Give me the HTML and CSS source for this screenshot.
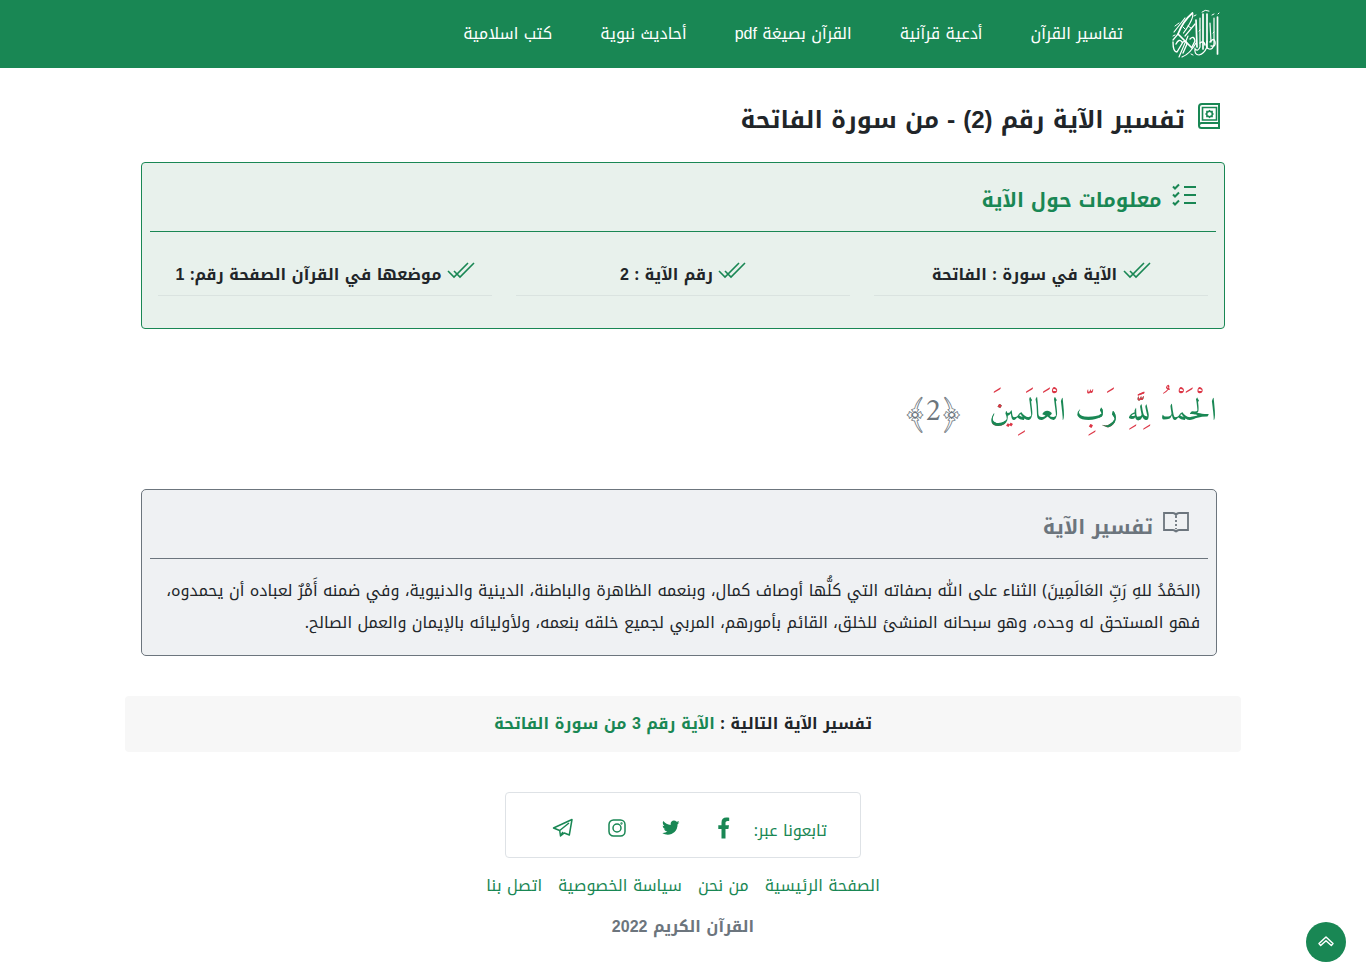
FILE: index.html
```html
<!DOCTYPE html>
<html lang="ar" dir="rtl">
<head>
<meta charset="utf-8">
<title>تفسير الآية رقم (2) - من سورة الفاتحة</title>
<link rel="stylesheet" href="styles.css">
</head>
<body>
<header class="navbar">
  <div class="nav-inner">
    <svg class="logo" width="50" height="50" viewBox="0 0 50 50" fill="none" stroke="#fff" stroke-width="1.200" stroke-linecap="round" stroke-linejoin="round">
      <path stroke-width="1.700" d="M46.500 8v37M36 5v33M32 5v35M25 11l1 27M21.500 4Q12 12 7 25l14 14"/>
      <path d="M43 9v26q-1 6-5 5t-2-8M39 14l1 19M36 38q-3 7-8 8-5 0-4-7M29 9v29q-2 5-5 2M21.500 4q2 5-9 20M14 9L3 23M14 27l10-12M7 25l-5 6M17 27L8 48M11 48q8-3 14-14"/>
      <path stroke-width="1.400" d="M2 33q0 10 4 10l6-10q3-2 4 2l-4 9M5 35q3-6 6-2M19 30q4-4 5 2l-3 6M39 33q4-5 5 0t-4 4M29 34q4-3 5 2"/>
      <path stroke-width="1" d="M31 3q3-3 7-1M41 6l2-1M23 7l2-1M4 17l4-3M17 17l3 2M2 27l2-1M20 45l2 1M28 22l1-1M42 24l1-1M12 18l2 2M47 5l1-1"/>
    </svg>
    <nav class="menu"><a>تفاسير القرآن</a><a>أدعية قرآنية</a><a>القرآن بصيغة <span class="latin">pdf</span></a><a>أحاديث نبوية</a><a>كتب اسلامية</a></nav>
  </div>
</header>
<main class="container">
  <h1 class="title">
    <svg class="quran" width="22" height="27" viewBox="0 0 22 27" fill="none" stroke="#198754" stroke-width="2"><path d="M21 20H3.500A2.500 2.500 0 0 0 1 22.500V4a3 3 0 0 1 3-3h17v24H3.500a2.500 2.500 0 0 1 0-5"/><path stroke-width="1.600" d="M4.500 4.500h14v12.500h-14z"/><path stroke-width="1.700" d="M11.500 7.800l1 .8h1.500v1.400l.8 1-.8 1v1.400h-1.500l-1 .8-1-.8H9V12l-.8-1 .8-1V8.600h1.500z"/></svg>
    <span>تفسير الآية رقم <span class="latin">(2)</span> - من سورة الفاتحة</span>
  </h1>
  <section class="info">
    <h2 class="info-title"><svg width="25" height="24" viewBox="0 0 25 24" fill="none" stroke="#198754" stroke-width="2"><path d="M12 4h12M12 12h12M12 20h12M1 3.500l2 2 4-4M1 11.500l2 2 4-4M1 19.500l2 2 4-4"/></svg><span>معلومات حول الآية</span></h2>
    <div class="facts">
      <div class="fact"><svg width="28" height="17" viewBox="0 0 28 17" fill="none" stroke="#198754" stroke-width="1.600"><path d="M1 9l6 6L21 1M7 9l6 6L27 1"/></svg><span>الآية في سورة : الفاتحة</span></div>
      <div class="fact"><svg width="28" height="17" viewBox="0 0 28 17" fill="none" stroke="#198754" stroke-width="1.600"><path d="M1 9l6 6L21 1M7 9l6 6L27 1"/></svg><span>رقم الآية : <span class="latin">2</span></span></div>
      <div class="fact"><svg width="28" height="17" viewBox="0 0 28 17" fill="none" stroke="#198754" stroke-width="1.600"><path d="M1 9l6 6L21 1M7 9l6 6L27 1"/></svg><span>موضعها في القرآن الصفحة رقم: <span class="latin">1</span></span></div>
    </div>
  </section>
  <div class="verse"><span class="ayah">الْحَمْدُ لِلَّهِ رَبِّ الْعَالَمِينَ</span><span class="number">﴿2﴾</span></div>
  <section class="tafsir">
    <h2 class="tafsir-title"><svg width="28" height="24" viewBox="0 0 28 24" fill="none" stroke="#6c757d" stroke-width="1.800"><path d="M14 22q-1-2-3-2H2V3h9q2 0 3 2q1-2 3-2h9v17h-9q-2 0-3 2"/><path stroke-dasharray="2 2" d="M14 6v13"/></svg><span>تفسير الآية</span></h2>
    <p class="body-text"><span>(الحَمْدُ للهِ رَبِّ العَالَمِينَ) الثناء على اللّٰه بصفاته التي كلُّها أوصاف كمال، وبنعمه الظاهرة والباطنة، الدينية والدنيوية، وفي ضمنه أَمْرٌ لعباده أن يحمدوه،</span><span>فهو المستحق له وحده، وهو سبحانه المنشئ للخلق، القائم بأمورهم، المربي لجميع خلقه بنعمه، ولأوليائه بالإيمان والعمل الصالح.</span></p>
  </section>
  <div class="next"><span>تفسير الآية التالية : <a>الآية رقم <span class="latin">3</span> من سورة الفاتحة</a></span></div>
</main>
<footer class="footer">
  <div class="social"><span>تابعونا عبر:</span>
    <svg class="fb" width="12" height="22" viewBox="0 0 12 22" fill="#198754"><path d="M3.500 21.500V12H.3V8.200h3.200V5.400C3.500 2.200 5.300.5 8.300.5c1.400 0 2.900.2 2.900.2v3.200H9.600c-1.600 0-2.100 1-2.100 2v2.300H11l-.6 3.800H7.500v9.500z"/></svg>
    <svg class="tw" width="18" height="16" viewBox="0 0 18 16" fill="#198754"><path d="M17.500 2.300q-.9.500-2 .6Q16.700 2.200 17 .9q-1 .7-2.300.9C12-1 8 1 8.700 4.900 5.700 4.700 3.100 3.300 1.300 1c-1 1.700-.5 3.700 1.100 4.900q-1 0-1.700-.5c0 1.800 1.200 3.300 2.900 3.700q-.8.200-1.600 0c.5 1.500 1.800 2.500 3.400 2.500Q3.300 13.200.3 13c6.500 4.100 15.300.2 15.300-8.800q1.200-.8 1.900-1.900"/></svg>
    <svg class="ig" width="18" height="18" viewBox="0 0 18 18" fill="none" stroke="#198754" stroke-width="1.500"><rect x="1" y="1" width="16" height="16" rx="4.500"/><circle cx="9" cy="9" r="4"/><circle cx="13.500" cy="4.500" r=".4"/></svg>
    <svg class="tg" width="21" height="19" viewBox="0 0 21 19" fill="none" stroke="#198754" stroke-width="1.500" stroke-linejoin="round"><path d="M1.500 10L20 1.500l-2.700 15.500-5-2-3.800 3-.8-5.500zM7.700 12.500L17 5M9 17l2-3"/></svg>
  </div>
  <nav class="links"><a>الصفحة الرئيسية</a><a>من نحن</a><a>سياسة الخصوصية</a><a>اتصل بنا</a></nav>
  <div class="copyright"><span>القرآن الكريم <span class="latin">2022</span></span></div>
</footer>
<a class="to-top"><svg width="18" height="14" viewBox="0 0 18 14" fill="none" stroke="#fff" stroke-width="1.500" stroke-linejoin="round"><path d="M9 2l7 6.500-1.700 2L9 5.700l-5.300 4.800L2 8.500z"/></svg></a>
</body>
</html>
```
FILE: styles.css
```css
* { box-sizing: border-box; }
body { margin: 0; height: 972px; overflow: hidden; background: #fff; color: #212529; font-family: "Noto Kufi Arabic", "Liberation Sans", "DejaVu Sans", sans-serif; font-size: 16px; }
h1, h2, p { margin: 0; }
svg { display: block; flex: none; }
span, a { white-space: nowrap; }
.latin { font-family: "Liberation Sans", sans-serif; }
.navbar { height: 68px; background: #198754; color: #fff; }
.nav-inner { width: 1116px; margin: auto; padding: 9px 20px 0; display: flex; }
.menu { display: flex; gap: 48px; margin-right: 48px; height: 48px; align-items: center; }
.container { width: 1116px; margin: 0 auto; }
.title { height: 94px; padding: 35px 21px 0; display: flex; gap: 13px; font-size: 24px; line-height: 34px; }
.info { height: 167px; margin: 0 16px; padding: 0 8px; border: 1px solid #198754; border-radius: 4px; background: #e8f1ec; }
.info-title { height: 69px; padding: 20px 19px 0; display: flex; gap: 10.5px; border-bottom: 1px solid #198754; color: #198754; font-size: 20px; line-height: 34px; }
.facts { display: grid; grid-template-columns: repeat(3, 1fr); gap: 24px; padding: 24px 8px 0; }
.fact { height: 40px; display: flex; justify-content: center; gap: 5.5px; padding-top: 5px; border-bottom: 1px solid #dae3e0; font-weight: 700; line-height: 28px; }
.fact svg { margin: 1px -0.5px 0 0; }
.verse { height: 160px; padding: 51px 24px 0; display: flex; gap: 25px; font-family: "Amiri", serif; font-size: 32px; line-height: 64px; }
/* Letters are green, vowel signs and dots red. */
.ayah {
  height: 70px; margin-top: -11px; font-family: "Amiri Quran", "Amiri", serif; color: transparent;
  background:
    linear-gradient(#dc3545, #dc3545) right 213px top 32px / 10px 7px no-repeat,
    linear-gradient(#dc3545, #dc3545) right 67px top 0 / 17px 33px no-repeat,
    linear-gradient(#198754, #198754) right 212px top 40px / 20px 18px no-repeat,
    linear-gradient(#198754, #198754) right 101px top 40px / 17px 22px no-repeat,
    linear-gradient(#dc3545 28px, #198754 28px 54px, #dc3545 54px);
  background-clip: text; -webkit-background-clip: text;
}
.number { color: #6c757d; }
.tafsir { height: 167px; margin: 0 24px 0 16px; padding: 0 8px; border: 1px solid #6c757d; border-radius: 5px; background: #eff1f3; }
.tafsir-title { height: 69px; padding: 20px 18px 0; display: flex; gap: 9px; border-bottom: 1px solid #6c757d; color: #6c757d; font-size: 20px; line-height: 34px; }
.body-text { padding: 16px 8px; line-height: 32px; }
.body-text span { display: block; width: max-content; }
.next { margin-top: 40px; height: 56px; background: #f7f7f7; border-radius: 4px; text-align: center; font-weight: 700; line-height: 56px; }
.next a { color: #198754; }
.footer { margin-top: 40px; color: #198754; display: flex; flex-direction: column; align-items: center; }
.social { display: flex; width: 356px; height: 66px; border: 1px solid #dee2e6; border-radius: 4px; padding: 0 33px; line-height: 76px; }
.social span { width: 74px; }
.fb { margin: 24px 23px 0 0; }
.tw { margin: 27px 38px 0 0; }
.ig { margin: 26px 36px 0 0; }
.tg { margin: 25px 35px 0 0; }
.links { display: flex; gap: 16px; margin-top: 12px; line-height: 32px; }
.copyright { margin-top: 10px; line-height: 30px; color: #6c757d; font-weight: 700; }
.to-top { position: fixed; left: 1306px; top: 922px; width: 40px; height: 40px; border-radius: 50%; background: #198754; display: grid; place-items: center; }
```
